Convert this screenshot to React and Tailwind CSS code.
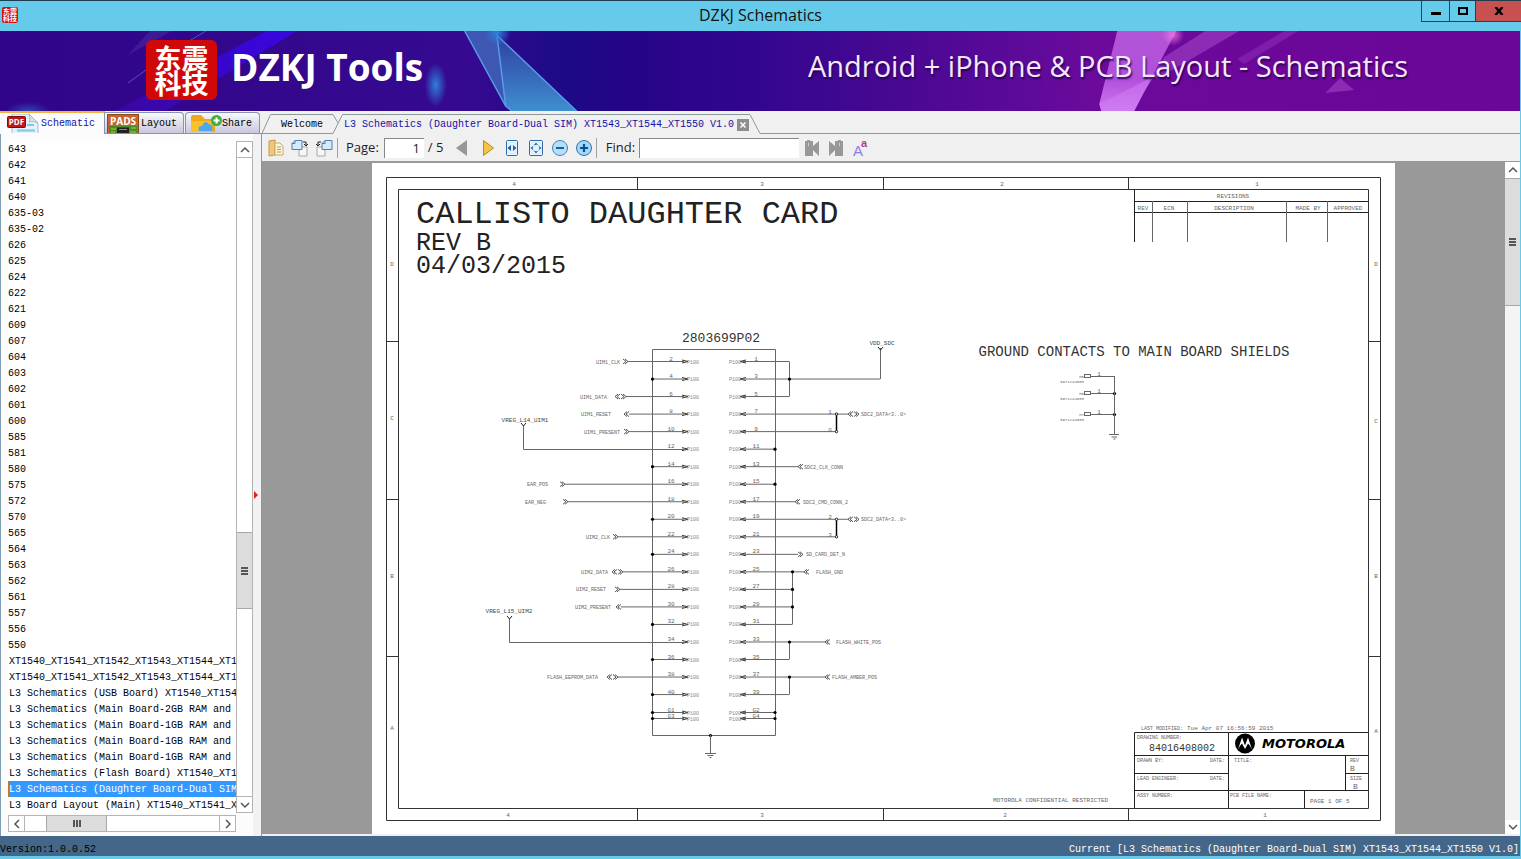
const models = [
    "643", "642", "641", "640", "635-03", "635-02", "626", "625", "624", "622", "621",
    "609", "607", "604", "603", "602", "601", "600", "585", "581", "580", "575", "572",
    "570", "565", "564", "563", "562", "561", "557", "556", "550",
]

const files = [
    "XT1540_XT1541_XT1542_XT1543_XT1544_XT1",
    "XT1540_XT1541_XT1542_XT1543_XT1544_XT1",
    "L3 Schematics (USB Board) XT1540_XT154",
    "L3 Schematics (Main Board-2GB RAM and",
    "L3 Schematics (Main Board-1GB RAM and",
    "L3 Schematics (Main Board-1GB RAM and",
    "L3 Schematics (Main Board-1GB RAM and",
    "L3 Schematics (Flash Board) XT1540_XT1",
    "L3 Schematics (Daughter Board-Dual SIM",
    "L3 Board Layout (Main) XT1540_XT1541_X",
]

const documentName = "L3 Schematics (Daughter Board-Dual SIM) XT1543_XT1544_XT1550 V1.0"
const selectedFile = 8

const pinY = (index) => 361.5 + index * 17.53

// Nets leaving the left side of the connector: pin row, wire start, arrows, label
const leftNets = [
    { row: 0, x: 628, kind: ">>", label: "UIM1_CLK", lx: 596 },
    { row: 2, x: 626, kind: "<>", label: "UIM1_DATA", lx: 580 },
    { row: 3, x: 629, kind: "<<", label: "UIM1_RESET", lx: 581 },
    { row: 4, x: 629, kind: ">>", label: "UIM1_PRESENT", lx: 584 },
    { row: 7, x: 565, kind: ">>", label: "EAR_POS", lx: 527 },
    { row: 8, x: 568, kind: ">>", label: "EAR_NEG", lx: 525 },
    { row: 10, x: 618, kind: ">>", label: "UIM2_CLK", lx: 586 },
    { row: 12, x: 623, kind: "<>", label: "UIM2_DATA", lx: 581 },
    { row: 13, x: 620, kind: ">>", label: "UIM2_RESET", lx: 576 },
    { row: 14, x: 621, kind: "<<", label: "UIM2_PRESENT", lx: 575 },
    { row: 18, x: 618, kind: "<>", label: "FLASH_EEPROM_DATA", lx: 547 },
]

const rightNets = [
    { row: 3, x: 859, kind: "<>", label: "SDC2_DATA<3..0>", lx: 861 },
    { row: 6, x: 803, kind: "<<", label: "SDC2_CLK_CONN", lx: 804 },
    { row: 8, x: 800, kind: "<<", label: "SDC2_CMD_CONN_2", lx: 803 },
    { row: 9, x: 859, kind: "<>", label: "SDC2_DATA<3..0>", lx: 861 },
    { row: 11, x: 803, kind: ">>", label: "SD_CARD_DET_N", lx: 806 },
    { row: 12, x: 809, kind: "<<", label: "FLASH_GND", lx: 816 },
    { row: 16, x: 830, kind: "<<", label: "FLASH_WHITE_POS", lx: 836 },
    { row: 18, x: 830, kind: "<<", label: "FLASH_AMBER_POS", lx: 832 },
]

const groundedLeft = [1, 6, 9, 11, 15, 17, 19]
const rightEnds = [789, 880, 789, 836, 836, 775, 798, 775, 795, 836, 836, 798, 804, 792, 792, 792, 825, 789, 825, 789]

function Arrows({ x, y, kind }) {
    const right = (p) => `M${p - 3} ${y - 2.5}l3 2.5l-3 2.5`
    const left = (p) => `M${p} ${y - 2.5}l-3 2.5l3 2.5`
    const d = {
        ">>": right(x) + right(x - 2),
        "<<": left(x) + left(x - 2),
        "<>": left(x - 6) + left(x - 8) + right(x) + right(x - 2),
    }[kind]
    return <path d={d} stroke="#555" />
}

function Dot({ x, y }) {
    return <circle cx={x} cy={y} r="1.6" fill="#000" stroke="none" />
}

function T({ x, y, children, size = "text-[6px]", anchor = "start", fill = "#666" }) {
    return (
        <text x={x} y={y} textAnchor={anchor} fill={fill} stroke="none" className={size}>
            {children}
        </text>
    )
}

function Pin({ y, left, right }) {
    return (
        <g>
            <path d={`M682 ${y - 1.5}l6 1.5l-6 1.5M746 ${y - 1.5}l-6 1.5l6 1.5`} stroke="#333" />
            <T x={687} y={y + 2} size="text-[5px]" fill="#888">P100</T>
            <T x={729} y={y + 2} size="text-[5px]" fill="#888">P100</T>
            <T x={671} y={y - 1} anchor="middle">{left}</T>
            <T x={756} y={y - 1} anchor="middle">{right}</T>
        </g>
    )
}

function Connector() {
    return (
        <g>
            <T x={721} y={342} size="text-[13px]" anchor="middle" fill="#333">2803699P02</T>
            <path d="M652.5 349.5H775.5V735.5H652.5Z" />

            {Array.from({ length: 20 }, (_, i) => (
                <g key={i}>
                    <Pin y={pinY(i)} left={i * 2 + 2} right={i * 2 + 1} />
                    <path d={`M742 ${pinY(i)}H${rightEnds[i]}`} />
                </g>
            ))}
            <Pin y={712.5} left="G1" right="G2" />
            <Pin y={718.5} left="G3" right="G4" />

            {groundedLeft.map((row) => (
                <g key={row}>
                    <path d={`M652 ${pinY(row)}H684`} />
                    <Dot x={652.5} y={pinY(row)} />
                </g>
            ))}
            <path d="M652 712.5H684M652 718.5H684M742 712.5H775M742 718.5H775" />
            {[712.5, 718.5].map((y) => (
                <g key={y}>
                    <Dot x={652.5} y={y} />
                    <Dot x={775} y={y} />
                </g>
            ))}
            <Dot x={775} y={pinY(5)} />
            <Dot x={775} y={pinY(7)} />

            {leftNets.map((net) => (
                <g key={net.label}>
                    <path d={`M${net.x} ${pinY(net.row)}H684`} />
                    <Arrows x={net.x} y={pinY(net.row)} kind={net.kind} />
                    <T x={net.lx} y={pinY(net.row) + 2} size="text-[5px]">{net.label}</T>
                </g>
            ))}
            {rightNets.map((net) => (
                <g key={net.row}>
                    <Arrows x={net.x} y={pinY(net.row)} kind={net.kind} />
                    <T x={net.lx} y={pinY(net.row) + 2} size="text-[5px]">{net.label}</T>
                </g>
            ))}

            {/* supply rails */}
            <path d="M523.5 425V449.5H684M509.5 618V642.5H684M880.5 348V379" />
            <path d="M521 423l2.5 3l2.5 -3M507 616l2.5 3l2.5 -3M878 347l2.5 3l2.5 -3" stroke="#222" />
            <T x={525} y={422} anchor="middle" fill="#444">VREG_L14_UIM1</T>
            <T x={509} y={613} anchor="middle" fill="#444">VREG_L15_UIM2</T>
            <T x={882} y={345} anchor="middle" fill="#444">VDD_SDC</T>

            {/* joined pins on the right */}
            <path d="M789.5 361.5V396.5M792.5 572V624.5M789.5 642V659.5M789.5 677V694.5" />
            <Dot x={789.5} y={pinY(1)} />
            <Dot x={792.5} y={pinY(12)} />
            <Dot x={792.5} y={pinY(13)} />
            <Dot x={792.5} y={pinY(14)} />
            <Dot x={789.5} y={pinY(16)} />
            <Dot x={789.5} y={pinY(18)} />
            {[3, 9].map((row) => (
                <g key={row}>
                    <path d={`M836.5 ${pinY(row)}V${pinY(row + 1)}`} stroke="#000" strokeWidth="1.5" />
                    <path d={`M836 ${pinY(row)}H849`} />
                    <circle cx="836.5" cy={pinY(row)} r="1.2" fill="#fff" stroke="#222" />
                    <circle cx="836.5" cy={pinY(row + 1)} r="1.2" fill="#fff" stroke="#222" />
                    <T x={830} y={pinY(row)} anchor="middle">{row === 3 ? "1" : "2"}</T>
                    <T x={830} y={pinY(row + 1)} anchor="middle">{row === 3 ? "0" : "3"}</T>
                </g>
            ))}

            <Dot x={710.5} y={735.5} />
            <path d="M710.5 735V753M705 753.5H716M707.5 755.5H713.5M709.5 757.5H711.5" />
        </g>
    )
}

function GroundContacts() {
    return (
        <g>
            <T x={1134} y={356} size="text-[14px]" anchor="middle" fill="#333">
                GROUND CONTACTS TO MAIN BOARD SHIELDS
            </T>
            {[376.5, 393.5, 414.5].map((y, i) => (
                <g key={y}>
                    <rect x="1084.5" y={y - 2} width="6" height="3" />
                    <path d={`M1091 ${y}H1114`} />
                    <T x={1099} y={y - 1} anchor="middle">1</T>
                    <T x={1084} y={y + 1} size="text-[4px]" anchor="end">{["M5", "M6", "M7"][i]}</T>
                    <T x={1084} y={y + 6} size="text-[4px]" anchor="end">3971244003</T>
                </g>
            ))}
            <Dot x={1114.5} y={393.5} />
            <Dot x={1114.5} y={414.5} />
            <path d="M1114.5 376V434M1109 434.5H1119M1111.5 437H1117M1113.5 439H1115.5" />
        </g>
    )
}

function TitleBlock() {
    return (
        <g>
            <T x={1141} y={730} size="text-[5px]">LAST MODIFIED:</T>
            <T x={1187} y={730}>Tue Apr 07 16:56:59 2015</T>
            <path
                stroke="#222"
                d="M1134.5 808V732.5H1368M1134 755.5H1368M1134 773.5H1228M1134 790.5H1368M1228.5 732V808M1345.5 755V790M1345 773.5H1368M1304.5 790V808"
            />
            <T x={1137} y={739} size="text-[5px]">DRAWING NUMBER:</T>
            <T x={1149} y={751} size="text-[10px]" fill="#333">84016408002</T>
            <T x={1137} y={762} size="text-[5px]">DRAWN BY:</T>
            <T x={1210} y={762} size="text-[5px]">DATE:</T>
            <T x={1234} y={762} size="text-[5px]">TITLE:</T>
            <T x={1350} y={762} size="text-[5px]">REV</T>
            <T x={1350} y={771} size="text-[8px]">B</T>
            <T x={1137} y={780} size="text-[5px]">LEAD ENGINEER:</T>
            <T x={1210} y={780} size="text-[5px]">DATE:</T>
            <T x={1350} y={780} size="text-[5px]">SIZE</T>
            <T x={1353} y={789} size="text-[8px]">B</T>
            <T x={1137} y={797} size="text-[5px]">ASSY NUMBER:</T>
            <T x={1230} y={797} size="text-[5px]">PCB FILE NAME:</T>
            <T x={1310} y={803}>PAGE 1 OF 5</T>
            <T x={993} y={802}>MOTOROLA CONFIDENTIAL RESTRICTED</T>

            <circle cx="1245" cy="743.5" r="10" fill="#000" stroke="none" />
            <path
                d="M1238 749.5L1242 737.5L1245 745.5L1248 737.5L1252 749.5C1250.5 746.5 1249.2 744.5 1248 743.5L1245 749L1242 743.5C1240.8 744.5 1239.5 746.5 1238 749.5Z"
                fill="#fff"
                stroke="none"
            />
            <text
                x="1262"
                y="748"
                fill="#000"
                stroke="none"
                className="font-['DejaVu_Sans',sans-serif] text-[13px] font-bold italic"
            >
                MOTOROLA
            </text>
        </g>
    )
}

function Sheet() {
    const columns = [[514, 508, "4"], [762, 762, "3"], [1002, 1005, "2"], [1257, 1265, "1"]]
    const rows = [[266, 266, "D"], [420, 423, "C"], [578, 578, "B"], [730, 733, "A"]]

    return (
        <svg
            viewBox="372 163 1023 671"
            className="h-full max-w-full bg-white font-['Liberation_Mono',monospace]"
            fill="none"
            stroke="#666"
            role="img"
            aria-label="Callisto daughter card"
        >
            <path
                stroke="#333"
                d="M386.5 177.5H1380.5V820.5H386.5ZM398.5 189.5H1368.5V808.5H398.5Z
                M637.5 177V189M883.5 177V189M1128.5 177V189M637.5 808V820M883.5 808V820M1128.5 808V820
                M386 341.5H398M386 499.5H398M386 656.5H398M1368 341.5H1380M1368 499.5H1380M1368 656.5H1380"
            />
            {columns.map(([top, bottom, name]) => (
                <g key={name}>
                    <T x={top} y={186} anchor="middle">{name}</T>
                    <T x={bottom} y={817} anchor="middle">{name}</T>
                </g>
            ))}
            {rows.map(([left, right, name]) => (
                <g key={name}>
                    <T x={392} y={left} anchor="middle">{name}</T>
                    <T x={1376} y={right} anchor="middle">{name}</T>
                </g>
            ))}

            <T x={416} y={223} size="text-[32px]" fill="#222">CALLISTO DAUGHTER CARD</T>
            <T x={416} y={250} size="text-[25px]" fill="#222">REV B</T>
            <T x={416} y={273} size="text-[25px]" fill="#222">04/03/2015</T>

            <path stroke="#222" d="M1134.5 189V242M1134 201.5H1368M1134 212.5H1368" />
            <path d="M1152.5 201V242M1187.5 201V242M1286.5 201V242M1327.5 201V242" />
            <T x={1233} y={198} anchor="middle">REVISIONS</T>
            <T x={1143} y={210} anchor="middle">REV</T>
            <T x={1169} y={210} anchor="middle">ECN</T>
            <T x={1234} y={210} anchor="middle">DESCRIPTION</T>
            <T x={1308} y={210} anchor="middle">MADE BY</T>
            <T x={1348} y={210} anchor="middle">APPROVED</T>

            <Connector />
            <GroundContacts />
            <TitleBlock />
        </svg>
    )
}

function Banner() {
    return (
        <header className="relative flex h-20 shrink-0 items-center justify-between overflow-hidden bg-[#310589] pr-28 pb-[2px] pl-[146px]">
            <svg viewBox="0 0 1521 80" preserveAspectRatio="none" className="absolute inset-0 h-full w-full" aria-hidden="true">
                <defs>
                    <linearGradient id="sky">
                        <stop offset="0" stopColor="#310589" />
                        <stop offset="0.31" stopColor="#350a90" />
                        <stop offset="0.37" stopColor="#1d0a85" />
                        <stop offset="0.42" stopColor="#260488" />
                        <stop offset="0.5" stopColor="#330690" />
                        <stop offset="0.58" stopColor="#460890" />
                        <stop offset="0.66" stopColor="#590a98" />
                        <stop offset="0.72" stopColor="#6c0a9c" />
                        <stop offset="1" stopColor="#6a0698" />
                    </linearGradient>
                    <linearGradient id="beam" x1="1" y1="0" x2="0" y2="1">
                        <stop offset="0" stopColor="#3a06e0" />
                        <stop offset="0.6" stopColor="#3606c4" />
                        <stop offset="1" stopColor="#4008b0" stopOpacity="0.6" />
                    </linearGradient>
                    <linearGradient id="crystal" x1="0" y1="0" x2="0" y2="1">
                        <stop offset="0" stopColor="#2e3fa0" />
                        <stop offset="1" stopColor="#3f8ed0" />
                    </linearGradient>
                    <linearGradient id="pink" x1="0" y1="0" x2="0" y2="1">
                        <stop offset="0" stopColor="#b355d6" />
                        <stop offset="0.6" stopColor="#b24fdc" />
                        <stop offset="1" stopColor="#cf78f0" />
                    </linearGradient>
                    <radialGradient id="glow">
                        <stop offset="0" stopColor="#2f7fd8" />
                        <stop offset="1" stopColor="#2f7fd8" stopOpacity="0" />
                    </radialGradient>
                    <radialGradient id="spark">
                        <stop offset="0" stopColor="#f07ae0" stopOpacity="0.8" />
                        <stop offset="1" stopColor="#f07ae0" stopOpacity="0" />
                    </radialGradient>
                </defs>
                <rect width="1521" height="80" fill="url(#sky)" />
                <path d="M267 0H297L165 80H115Z" fill="url(#beam)" />
                <path d="M150 0H172L128 24Z" fill="#4a2fa0" opacity="0.5" />
                <path d="M206 0L186 12M160 29L128 52" stroke="#6a6ae0" opacity="0.7" />
                <ellipse cx="436" cy="54" rx="11" ry="22" fill="url(#glow)" />
                <ellipse cx="28" cy="80" rx="22" ry="9" fill="url(#glow)" opacity="0.5" />
                <path d="M465 0H497L506 75Z" fill="#3d57b2" />
                <path d="M497 4L577 80H512L506 75Z" fill="url(#crystal)" />
                <path d="M465 0L506 75L512 80M497 2L506 75M497 4L577 80" stroke="#5a9aec" strokeWidth="1.5" fill="none" />
                <circle cx="498" cy="2" r="13" fill="url(#glow)" />
                <path d="M1118 0H1177L1135 80H1102L1100 73Z" fill="url(#pink)" />
                <path d="M1100 73L1155 45L1144 62L1135 80H1102Z" fill="#d080f4" opacity="0.5" />
                <path d="M1206 0H1240L1175 38L1150 50L1165 26Z" fill="#9a3cc0" opacity="0.7" />
                <path d="M1285 0H1299L1245 33L1238 28Z" fill="#8a2cb4" opacity="0.6" />
                <path d="M1341 47L1355 59L1326 62Z" fill="#8a2cb4" />
                <circle cx="1174" cy="4" r="11" fill="url(#spark)" />
            </svg>
            <div className="relative flex items-center gap-[14px]">
                <div className="flex h-[60px] w-[71px] flex-col items-center justify-center rounded-md bg-[#d10808] font-['Noto_Sans_CJK_SC',sans-serif] text-[27px] leading-[25px] font-bold text-white">
                    <span>东震</span>
                    <span>科技</span>
                </div>
                <h1 className="pb-[6px] font-['Open_Sans',sans-serif] text-[37px] leading-[60px] font-bold text-white">
                    DZKJ Tools
                </h1>
            </div>
            <p className="relative pb-2 font-['Open_Sans',sans-serif] text-[29px] leading-[64px] text-[#f4e8ff] [text-shadow:1px_2px_2px_#2a0050]">
                Android + iPhone &amp; PCB Layout - Schematics
            </p>
        </header>
    )
}

function TitleBar() {
    return (
        <div className="relative flex h-[31px] shrink-0 items-start border-t border-[#1d3c50] bg-[#66cbea]">
            <div className="mt-[6px] ml-[2px] flex h-4 w-4 flex-col items-center justify-center rounded-xs bg-[#cc1111] font-['Noto_Sans_CJK_SC',sans-serif] text-[7px] leading-[7px] font-bold text-white" aria-hidden="true">
                <span>东震</span>
                <span>科技</span>
            </div>
            <p className="flex-1 pr-[82px] pl-16 text-center font-['Open_Sans',sans-serif] text-[16px] leading-[29px] text-[#111]">
                DZKJ Schematics
            </p>
            <div className="absolute top-0 right-0 flex h-[21px] border-b border-l border-[#24414d]">
                <button aria-label="Minimize" className="flex w-7 justify-center border-r border-[#24414d] pt-[11px]">
                    <span className="h-[3px] w-[10px] bg-black" />
                </button>
                <button aria-label="Maximize" className="flex w-[26px] justify-center border-r border-[#24414d] pt-[6px]">
                    <span className="h-2 w-[10px] border-2 border-black" />
                </button>
                <button aria-label="Close" className="flex w-[45px] items-center justify-center bg-[#c75050]">
                    <svg viewBox="0 0 10 8" className="h-2 w-[10px]" stroke="#000" strokeWidth="2.4">
                        <path d="M1.5 0L8.5 8M8.5 0L1.5 8" />
                    </svg>
                </button>
            </div>
        </div>
    )
}

function PdfIcon() {
    return (
        <svg viewBox="0 0 32 19" className="h-[19px] w-8" aria-hidden="true">
            <path d="M5 0H22L31 9V19H5Z" fill="#e4f1fa" />
            <path d="M5 19V0H22L31 9V19" fill="none" stroke="#a9bccb" />
            <path d="M22 0C23 4 23 7 22 8C26 7 29 8 31 9Z" fill="#d4e4ee" stroke="#9ab" strokeWidth="0.7" />
            <path d="M20 11H27M10 16.500H28" stroke="#86c4e6" strokeWidth="2" />
            <rect x="0.5" y="2.5" width="18" height="11" rx="1" fill="#c01818" stroke="#7a0c0c" />
            <text x="9.5" y="11" textAnchor="middle" fill="#fff" className="font-['Open_Sans',sans-serif] text-[8px] font-bold">PDF</text>
        </svg>
    )
}

function PadsIcon() {
    return (
        <svg viewBox="0 0 32 19" className="h-[19px] w-8" aria-hidden="true">
            <rect x="0.5" y="0.5" width="31" height="19" fill="#c8642a" stroke="#8a4a20" />
            <rect x="2" y="12" width="28" height="7" fill="#4f8a2a" />
            <path d="M4 15H9M4 18H8M24 14H29M23 18H29" stroke="#a8c83a" />
            <rect x="10" y="13.5" width="12" height="6" fill="#222" />
            <path d="M12 15.5H20" stroke="#888" />
            <text x="16" y="10.5" textAnchor="middle" fill="#fff" className="font-['Open_Sans',sans-serif] text-[10px] font-bold">PADS</text>
        </svg>
    )
}

function ShareIcon() {
    return (
        <svg viewBox="0 0 32 19" className="h-[19px] w-8" aria-hidden="true">
            <path d="M1 3Q1 1 3 1H11L15 5H25V18H4Q1 18 1 15Z" fill="#f0a818" />
            <path d="M1 7H22V18H4Q1 18 1 15Z" fill="#fbc02a" />
            <path d="M9 17Q7 12 12 12Q15 5 19 10Q24 11 22 17Z" fill="#4fa8ec" />
            <circle cx="26.5" cy="6.5" r="5.5" fill="#3fae3c" />
            <path d="M26.5 3.5V9.5M23.5 6.5H29.5" stroke="#fff" strokeWidth="2" />
        </svg>
    )
}

function Chevron({ d }) {
    return (
        <svg viewBox="0 0 10 10" className="h-[10px] w-[10px]" fill="none" stroke="#555" strokeWidth="1.5">
            <path d={d} />
        </svg>
    )
}

function Sidebar() {
    return (
        <aside className="flex w-[262px] shrink-0 flex-col bg-[#f0f0f0]">
            <div className="flex h-[23px] shrink-0 items-end border-b border-[#8794ab]">
                <button className="-mb-px flex h-[23px] w-[105px] items-center gap-[2px] border-t-2 border-r border-t-[#f5b040] border-r-[#8794ab] bg-[#fcfcfe] pl-[7px] text-[#1010a8]">
                    <PdfIcon />
                    Schematic
                </button>
                <button className="flex h-[21px] w-[79px] items-center gap-[2px] rounded-tr-sm border-t border-r border-[#8794ab] bg-linear-to-b from-[#f8f8fc] to-[#c8c8dc] pl-[2px]">
                    <PadsIcon />
                    Layout
                </button>
                <button className="ml-px flex h-[21px] w-[75px] items-center rounded-t-sm border-t border-r border-l border-[#8794ab] bg-linear-to-b from-[#f8f8fc] to-[#c8c8dc] pl-1">
                    <ShareIcon />
                    Share
                </button>
            </div>

            <div className="flex min-h-0 flex-1 border-r border-l border-[#7f9db0] bg-[#fcfcfc]">
                <div className="flex min-w-0 flex-1 flex-col gap-[2px] pt-[7px] pb-1 pl-[7px]">
                    <div className="flex min-h-0 flex-1">
                        <ul className="min-w-0 flex-1 overflow-hidden bg-white">
                            {models.map((name) => (
                                <li key={name} className="h-4">
                                    <button className="block h-4 leading-[18px]">{name}</button>
                                </li>
                            ))}
                            {files.map((name, index) => (
                                <li key={index} className="h-4">
                                    <button
                                        className={
                                            index === selectedFile
                                                ? "block h-4 w-full border-y border-l border-dotted border-[#c07020] bg-[#3399ff] text-left leading-4 whitespace-nowrap text-white"
                                                : "block h-4 w-full pl-px text-left leading-[18px] whitespace-nowrap"
                                        }
                                    >
                                        {name}
                                    </button>
                                </li>
                            ))}
                        </ul>
                        <div className="flex w-[17px] shrink-0 flex-col border border-[#b4b4b4] bg-white">
                            <button aria-label="Scroll up" className="flex h-4 items-center justify-center border-b border-[#b4b4b4]">
                                <Chevron d="M1 7L5 3L9 7" />
                            </button>
                            <div className="flex-2" />
                            <div className="flex h-[77px] flex-col items-center justify-center gap-px border-y border-[#a8a8a8] bg-[#dcdcdc]">
                                <span className="h-[2px] w-[7px] bg-[#555]" />
                                <span className="h-[2px] w-[7px] bg-[#555]" />
                                <span className="h-[2px] w-[7px] bg-[#555]" />
                            </div>
                            <div className="flex-1" />
                            <button aria-label="Scroll down" className="flex h-4 items-center justify-center border-t border-[#b4b4b4]">
                                <Chevron d="M1 3L5 7L9 3" />
                            </button>
                        </div>
                    </div>
                    <div className="mr-[17px] flex h-[17px] shrink-0 border border-[#b4b4b4] bg-white">
                        <button aria-label="Scroll left" className="flex w-4 items-center justify-center border-r border-[#b4b4b4]">
                            <Chevron d="M7 1L3 5L7 9" />
                        </button>
                        <div className="flex-3" />
                        <div className="flex w-[61px] items-center justify-center gap-px border-x border-[#a8a8a8] bg-[#dcdcdc]">
                            <span className="h-[7px] w-[2px] bg-[#555]" />
                            <span className="h-[7px] w-[2px] bg-[#555]" />
                            <span className="h-[7px] w-[2px] bg-[#555]" />
                        </div>
                        <div className="flex-16" />
                        <button aria-label="Scroll right" className="flex w-4 items-center justify-center border-l border-[#b4b4b4]">
                            <Chevron d="M3 1L7 5L3 9" />
                        </button>
                    </div>
                </div>
                <div className="flex w-2 shrink-0 items-center bg-[#f2f2f4] pt-5">
                    <svg viewBox="0 0 6 8" className="h-2 w-[6px]" aria-hidden="true">
                        <path d="M1 0L5 4L1 8Z" fill="#e02010" />
                    </svg>
                </div>
            </div>
        </aside>
    )
}

function DocumentTabs() {
    return (
        <nav className="flex h-[23px] shrink-0 items-end bg-[#f0f0f0]">
            <button className="flex h-5 items-end">
                <svg viewBox="0 0 9 20" className="h-5 w-[9px]" fill="none" stroke="#8a9a9a">
                    <path d="M0 19.5H9M0 19.5L8.5 0.5" />
                </svg>
                <span className="block h-5 border-y border-[#8a9a9a] px-[10px] leading-[19px]">Welcome</span>
            </button>
            <button className="flex h-5 items-end text-[#1010a8]">
                <svg viewBox="0 0 10 20" className="h-5 w-[10px]" fill="none" stroke="#8a9a9a">
                    <path d="M0 0.5L5 9M0 19.5L9.5 0.5H10" />
                </svg>
                <span className="block h-5 border-t border-[#8a9a9a] pr-[3px] pl-px leading-[19px] whitespace-nowrap">
                    {documentName}
                </span>
            </button>
            <div className="h-5 border-t border-[#8a9a9a] pt-[4px]">
                <button aria-label="Close document" className="flex h-3 w-3 items-center justify-center bg-[#8e8e8e]">
                    <svg viewBox="0 0 6 6" className="h-[6px] w-[6px]" stroke="#fff" strokeWidth="1.5">
                        <path d="M0.5 0.5L5.5 5.5M5.5 0.5L0.5 5.5" />
                    </svg>
                </button>
            </div>
            <svg viewBox="0 0 11 20" className="h-5 w-[11px]" fill="none" stroke="#8a9a9a" aria-hidden="true">
                <path d="M0 0.5H1L11 19.5" />
            </svg>
            <div className="h-5 flex-1 border-b border-[#8a9a9a]" />
        </nav>
    )
}

function Tool({ label, children }) {
    return (
        <button aria-label={label} className="flex h-6 w-6 items-center justify-center">
            <svg viewBox="0 0 18 18" className="h-[18px] w-[18px]" fill="none">
                {children}
            </svg>
        </button>
    )
}

function Toolbar() {
    return (
        <div className="flex h-7 shrink-0 items-center border-b border-[#9a9a9a] bg-[#f0f0f0] pl-[2px] font-['Open_Sans',sans-serif] text-[13px] text-[#222]">
            <Tool label="Open">
                <path d="M2 2L8 1V16L2 17Z" fill="#f2c878" stroke="#c89a4a" />
                <path d="M8 4H13L16 7V16H8Z" fill="#fdf6dc" stroke="#c8a860" />
                <path d="M10 8H14M10 10.5H14M10 13H14" stroke="#b8964a" />
            </Tool>
            <Tool label="Rotate right">
                <path d="M8 8H16V17H8Z" fill="#f6f6f6" stroke="#a8a8a8" />
                <path d="M4 1.5H11V10.5H1V4.5Z" fill="#d6eafa" stroke="#4f80ae" />
                <path d="M1 4.5H4V1.5" stroke="#4f80ae" />
                <path d="M12 3H15V7M13 5L15 7L17 5" stroke="#222" />
            </Tool>
            <Tool label="Rotate left">
                <path d="M2 8H10V17H2Z" fill="#f6f6f6" stroke="#a8a8a8" />
                <path d="M10 1.5H17V10.5H7V4.5Z" fill="#d6eafa" stroke="#4f80ae" />
                <path d="M7 4.5H10V1.5" stroke="#4f80ae" />
                <path d="M6 3H3V7M1 5L3 7L5 5" stroke="#222" />
            </Tool>
            <div className="ml-px h-5 w-px bg-[#a0a0a0]" />
            <label htmlFor="page" className="pl-2">Page:</label>
            <input
                id="page"
                defaultValue="1"
                className="ml-[5px] h-5 w-10 border-t border-l border-[#888] bg-white pr-1 text-right outline-none"
            />
            <span className="w-[26px] pl-[4px] whitespace-nowrap">/ 5</span>
            <Tool label="Previous page">
                <path d="M14 1V17L3 9Z" fill="#989898" />
            </Tool>
            <div className="w-[2px]" />
            <Tool label="Next page">
                <path d="M4.5 1.5V16.5L14.5 9Z" fill="#f2c444" stroke="#b88a20" />
            </Tool>
            <Tool label="Fit width">
                <rect x="3.5" y="1.5" width="11" height="15" rx="1" fill="#e2f1fd" stroke="#2f6cab" />
                <path d="M8 6V12L4.5 9ZM10 6V12L13.5 9Z" fill="#2060a8" />
            </Tool>
            <Tool label="Fit page">
                <rect x="2.5" y="1.5" width="13" height="15" rx="1" fill="#e2f1fd" stroke="#2f6cab" />
                <path d="M9 3.5L11 6H7ZM9 14.5L11 12H7ZM3.5 9L6 7V11ZM14.5 9L12 7V11Z" fill="#2060a8" />
                <circle cx="9" cy="9" r="3.5" stroke="#7aa8d0" strokeDasharray="1 1" />
            </Tool>
            <Tool label="Zoom out">
                <circle cx="9" cy="9" r="7.5" fill="#b4e0fa" stroke="#4882b0" />
                <path d="M5 9H13" stroke="#15609f" strokeWidth="2" />
            </Tool>
            <Tool label="Zoom in">
                <circle cx="9" cy="9" r="7.5" fill="#a0d8fa" stroke="#3872a4" />
                <path d="M5 9H13M9 5V13" stroke="#0c5090" strokeWidth="2.2" />
            </Tool>
            <div className="h-5 w-px bg-[#a0a0a0]" />
            <label htmlFor="find" className="pl-[9px]">Find:</label>
            <input id="find" className="ml-1 h-5 w-40 border-t border-l border-[#888] bg-white px-1 outline-none" />
            <div className="w-px" />
            <Tool label="Find previous">
                <path d="M2 2H4V1H7V2H10V7L16 2V17L10 11V17H2Z" fill="#989898" />
                <path d="M5.5 4V7" stroke="#d0d0d0" />
            </Tool>
            <Tool label="Find next">
                <path d="M16 2H14V1H11V2H8V7L2 2V17L8 11V17H16Z" fill="#989898" />
                <path d="M12.5 4V7" stroke="#d0d0d0" />
            </Tool>
            <Tool label="Match case">
                <text x="2" y="17" fill="#8a7cf4" className="font-['Liberation_Sans',sans-serif] text-[15px]">A</text>
                <text x="10" y="8" fill="#b03a9c" className="font-['Liberation_Sans',sans-serif] text-[11px] font-bold">a</text>
            </Tool>
        </div>
    )
}

export default function App() {
    return (
        <div className="flex h-screen flex-col overflow-hidden border-b-3 border-[#66cbea] bg-[#f0f0f0] font-['Liberation_Mono','Noto_Sans_CJK_SC',monospace] text-[10px] text-black">
            <TitleBar />
            <div className="flex min-h-0 flex-1 flex-col border-r border-[#66cbea]">
                <Banner />
                <div className="flex min-h-0 flex-1">
                    <Sidebar />
                    <main className="flex min-w-0 flex-1 flex-col">
                        <DocumentTabs />
                        <Toolbar />
                        <div className="flex min-h-0 flex-1 border-b-2 border-[#f0f0f0] bg-[#999]">
                            <div className="flex min-w-0 flex-1 justify-center pt-px">
                                <Sheet />
                            </div>
                            <div className="flex w-[15px] shrink-0 flex-col bg-[#f4f4f4]">
                                <button aria-label="Page up" className="flex h-4 items-center justify-center bg-white">
                                    <Chevron d="M1 7L5 3L9 7" />
                                </button>
                                <div className="flex h-32 flex-col items-center justify-center gap-px border-y border-[#a8a8a8] bg-[#dcdcdc]">
                                    <span className="h-[2px] w-[7px] bg-[#555]" />
                                    <span className="h-[2px] w-[7px] bg-[#555]" />
                                    <span className="h-[2px] w-[7px] bg-[#555]" />
                                </div>
                                <div className="flex-1" />
                                <button aria-label="Page down" className="flex h-[14px] items-center justify-center bg-white">
                                    <Chevron d="M1 3L5 7L9 3" />
                                </button>
                            </div>
                        </div>
                    </main>
                </div>
                <footer className="flex h-5 shrink-0 items-center justify-between bg-[#446688] pt-[6px] pr-px">
                    <span>Version:1.0.0.52</span>
                    <span className="text-white">Current [{documentName}]</span>
                </footer>
            </div>
        </div>
    )
}
